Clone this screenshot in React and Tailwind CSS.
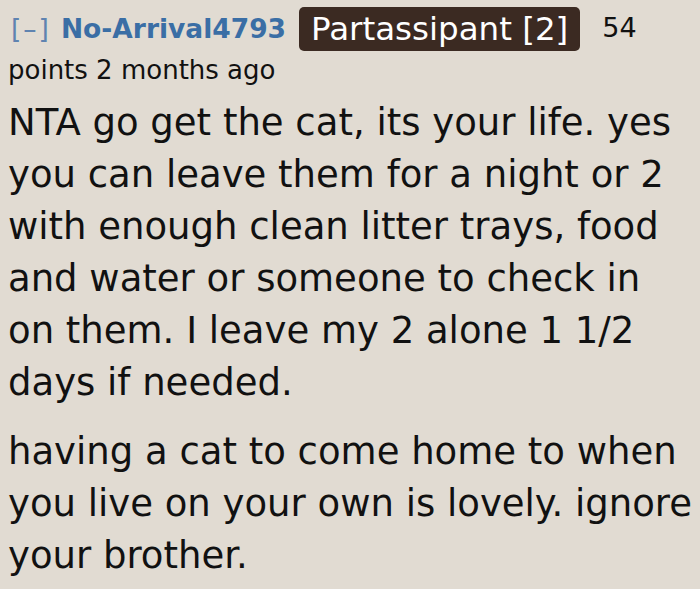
export default function App() {
  const first = [
    "NTA go get the cat, its your life. yes",
    "you can leave them for a night or 2",
    "with enough clean litter trays, food",
    "and water or someone to check in",
    "on them. I leave my 2 alone 1 1/2",
    "days if needed.",
  ]
  const second = [
    "having a cat to come home to when",
    "you live on your own is lovely. ignore",
    "your brother.",
  ]

  return (
    <div className="w-[700px] h-[589px] overflow-hidden bg-[#e1dbd2] text-[#111] font-['DejaVu_Sans',Verdana,sans-serif] pl-[8px]">
      <div className="flex items-center pt-[7px] text-[26.5px] leading-[44px]">
        <span className="text-[#5f83b0] ml-[3px] tracking-[2px]">[–]</span>
        <span className="ml-[10px] font-bold text-[#3a6ea5]">No-Arrival4793</span>
        <span className="ml-[13px] bg-[#3b2a22] text-white rounded-[5px] px-[12px] text-[32.5px] leading-[44px]">
          Partassipant [2]
        </span>
        <span className="ml-[22px] text-[27px] -mt-[2px]">54</span>
      </div>
      <div className="mt-[4px] text-[26px] leading-[30px]">points 2 months ago</div>
      <div className="mt-[12px] text-[37px] leading-[52px]">
        {first.map(l => (
          <div key={l} className="whitespace-nowrap">{l}</div>
        ))}
      </div>
      <div className="mt-[17px] text-[37px] leading-[52px]">
        {second.map(l => (
          <div key={l} className="whitespace-nowrap">{l}</div>
        ))}
      </div>
    </div>
  )
}
